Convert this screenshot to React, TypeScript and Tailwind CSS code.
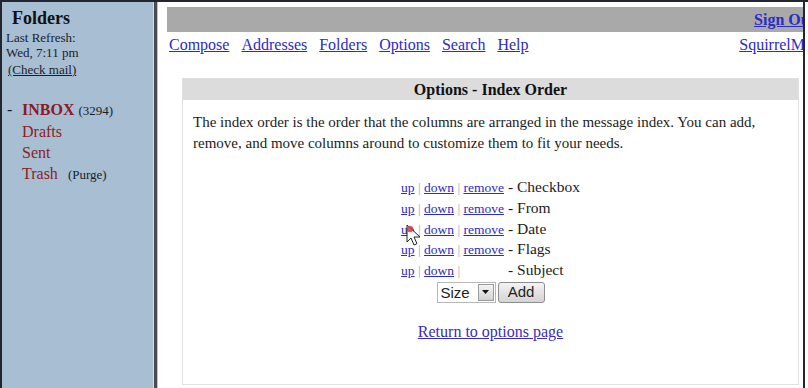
const navLinks = ["Compose", "Addresses", "Folders", "Options", "Search", "Help"];

const columns = [
  { label: "Checkbox", remove: true },
  { label: "From", remove: true },
  { label: "Date", remove: true },
  { label: "Flags", remove: true },
  { label: "Subject", remove: false },
];

const Sidebar = () => (
  <div className="w-[151px] shrink-0 bg-[#a7bed3] pt-[6px] text-[#1a1d2a]">
    <div className="pl-[10px] text-[18px] font-bold leading-[20px] text-[#111]">Folders</div>
    <div className="mt-[2px] pl-[4px] text-[13px] leading-[15px]">Last Refresh:</div>
    <div className="pl-[4px] text-[13px] leading-[15px]">Wed, 7:11 pm</div>
    <div className="mt-[2px] pl-[6px] text-[13px] leading-[15px]">
      <span className="underline">(Check mail)</span>
    </div>

    {/* FOLDER LIST */}
    <div className="mt-[22px] text-[16px] leading-[21px]">
      <div className="flex items-baseline pl-[5px]">
        <span className="w-[15px]">-</span>
        <span className="font-bold text-[#8b1a24]">INBOX</span>
        <span className="ml-[4px] text-[13px]">(3294)</span>
      </div>
      <div className="pl-[20px] text-[#8b1f24]">Drafts</div>
      <div className="pl-[20px] text-[#8b1f24]">Sent</div>
      <div className="flex items-baseline pl-[20px]">
        <span className="text-[#8b1f24]">Trash</span>
        <span className="ml-[10px] text-[13px]">(Purge)</span>
      </div>
    </div>
  </div>
);

const SizeSelect = () => (
  <div className="flex h-[21px] w-[59px] items-center border border-[#b8b8b8] bg-white">
    <span className="flex-1 pl-[3px] text-[15px] leading-[19px]">Size</span>
    <span className="mr-[1px] flex h-[17px] w-[16px] items-center justify-center border border-[#9a9a9a] bg-gradient-to-b from-[#f4f4f4] to-[#d2d2d2]">
      <svg width="7" height="4" viewBox="0 0 7 4">
        <path d="M0 0h7L3.5 4z" fill="#111" />
      </svg>
    </span>
  </div>
);

const Cursor = () => (
  <div className="absolute left-[404px] top-[222px]">
    <svg width="16" height="24" viewBox="0 0 16 24">
      <path
        d="M1 1v17l4-4 3 7 3-1.3-3-6.7h6z"
        fill="#fff"
        stroke="#222"
        strokeWidth="1"
        strokeLinejoin="round"
      />
      <circle cx="4" cy="5" r="3.2" fill="#d23a4a" opacity="0.85" />
    </svg>
  </div>
);

export default function App() {
  return (
    <div className="relative flex h-[388px] w-[808px] overflow-hidden border-l-2 border-t-2 border-[#23262e] bg-white font-['Liberation_Serif',serif] text-[#1c1c1c]">
      <Sidebar />

      {/* FRAME DIVIDER */}
      <div className="flex shrink-0">
        <div className="w-[1px] bg-[#d2dde8]" />
        <div className="w-[3px] bg-[#4b4b4f]" />
        <div className="w-[1px] bg-[#c4c4c4]" />
      </div>

      {/* MAIN FRAME */}
      <div className="w-[645px] shrink-0 overflow-hidden">
        <div className="w-[670px] pl-[9px] pt-[5px]">
          <div className="flex h-[25px] w-[660px] items-center justify-end bg-[#a9a9a9] pr-[12px]">
            <span className="text-[16px] font-bold text-[#2b2bc9] underline">Sign Out</span>
          </div>

          <div className="mt-[3px] flex w-[660px] items-center justify-between pl-[2px] pr-[6px] text-[16px] leading-[20px]">
            <div className="flex gap-[12px]">
              {navLinks.map((l) => (
                <span key={l} className="text-[#2b2bc9] underline">
                  {l}
                </span>
              ))}
            </div>
            <span className="text-[#2b2bc9] underline">SquirrelMail</span>
          </div>

          {/* OPTIONS BOX */}
          <div className="ml-[15px] mt-[23px] h-[307px] w-[617px] border border-[#e0e0e0]">
            <div className="h-[21px] bg-[#dcdcdc] text-center text-[16px] font-bold leading-[21px] text-[#111]">
              Options - Index Order
            </div>
            <p className="pl-[10px] pt-[12px] text-[15px] leading-[21px]">
              The index order is the order that the columns are arranged in the message index. You can add,
              <br />
              remove, and move columns around to customize them to fit your needs.
            </p>

            <div className="mt-[23px] grid auto-rows-[20.75px] grid-cols-[auto_auto] items-baseline justify-center gap-x-[4px] leading-[20px]">
              {columns.map((c) => (
                <div key={c.label} className="contents">
                  <span className="text-[13.5px]">
                    <span className="text-[#2b2bc9] underline">up</span>
                    <span className="text-[#a4aab8]"> | </span>
                    <span className="text-[#2b2bc9] underline">down</span>
                    <span className="text-[#a4aab8]"> |</span>
                    {c.remove && (
                      <>
                        {" "}
                        <span className="text-[#2b2bc9] underline">remove</span>
                      </>
                    )}
                  </span>
                  <span className="text-[15.5px]">- {c.label}</span>
                </div>
              ))}
            </div>

            <div className="mt-[1px] flex justify-center gap-[2px] font-['Liberation_Sans',sans-serif] text-[#222]">
              <SizeSelect />
              <div className="flex h-[21px] w-[47px] items-center justify-center rounded-[3px] border border-[#8e8e8e] bg-gradient-to-b from-[#f3f3f3] to-[#d4d4d4] text-[15px]">
                Add
              </div>
            </div>

            <div className="mt-[18px] text-center text-[16px] leading-[21px]">
              <span className="text-[#3a2bc4] underline">Return to options page</span>
            </div>
          </div>
        </div>
      </div>

      <div className="w-[2px] shrink-0 bg-[#23262e]" />
      <div className="flex-1 bg-white" />

      <Cursor />
    </div>
  );
}
